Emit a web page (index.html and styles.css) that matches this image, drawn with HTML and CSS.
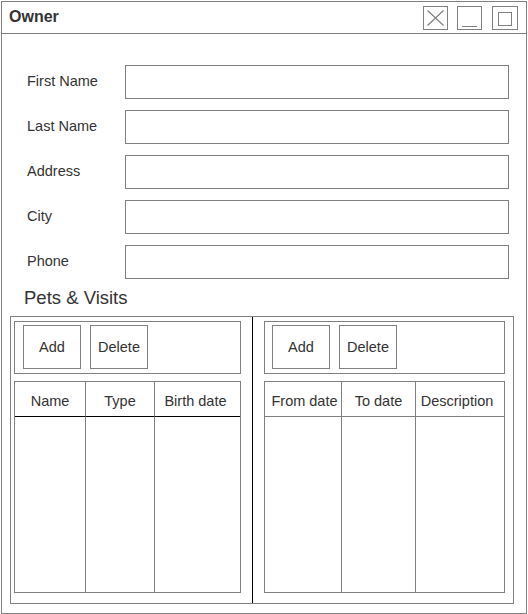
FILE: index.html
```html
<!DOCTYPE html>
<html>
<head>
<meta charset="utf-8">
<link rel="stylesheet" href="styles.css">
</head>
<body>
<div class="window">
  <div class="titlebar">
    <div class="title">Owner</div>
    <div class="controls">
      <div class="ctl ctl-close"><svg width="23" height="22" viewBox="0 0 23 22"><path d="M3.5 3.5 L19.5 18.5 M19.5 3.5 L3.5 18.5" stroke="#808080" stroke-width="1.2" fill="none"/></svg></div>
      <div class="ctl ctl-min"><svg width="23" height="22" viewBox="0 0 23 22"><path d="M4 19.5 H19" stroke="#808080" stroke-width="1" fill="none"/></svg></div>
      <div class="ctl ctl-max"><svg width="24" height="22" viewBox="0 0 24 22"><rect x="5.5" y="5.5" width="13" height="13" stroke="#808080" stroke-width="1" fill="none"/></svg></div>
    </div>
  </div>
  <div class="form">
    <div class="label">First Name</div><div class="input"></div>
    <div class="label">Last Name</div><div class="input"></div>
    <div class="label">Address</div><div class="input"></div>
    <div class="label">City</div><div class="input"></div>
    <div class="label">Phone</div><div class="input"></div>
  </div>
  <div class="section-title">Pets &amp; Visits</div>
  <div class="split">
    <div class="panel panel-left">
      <div class="toolbar">
        <div class="btn">Add</div>
        <div class="btn">Delete</div>
      </div>
      <div class="table table-pets">
        <div class="th">Name</div><div class="th">Type</div><div class="th">Birth date</div>
        <div class="td"></div><div class="td"></div><div class="td"></div>
      </div>
    </div>
    <div class="divider"></div>
    <div class="panel panel-right">
      <div class="toolbar">
        <div class="btn">Add</div>
        <div class="btn">Delete</div>
      </div>
      <div class="table table-visits">
        <div class="th">From date</div><div class="th">To date</div><div class="th">Description</div>
        <div class="td"></div><div class="td"></div><div class="td"></div>
      </div>
    </div>
  </div>
</div>
</body>
</html>
```

FILE: styles.css
```css
* { box-sizing: border-box; }
html, body { margin: 0; padding: 0; background: #fff; }
body {
  font-family: "Liberation Sans", Arial, sans-serif;
  font-size: 14.5px;
  color: #333;
}
.window {
  margin: 1px 0 0 1px;
  width: 526px;
  height: 613px;
  border: 1px solid #808080;
  display: flex;
  flex-direction: column;
}
.titlebar {
  height: 32px;
  border-bottom: 1px solid #808080;
  display: flex;
  justify-content: space-between;
  align-items: flex-start;
  padding: 0 8px 0 7px;
}
.title {
  font-weight: bold;
  font-size: 16px;
  line-height: 30px;
}
.controls {
  display: flex;
  padding-top: 4px;
}
.ctl {
  height: 24px;
  width: 25px;
  border: 1px solid #808080;
  display: flex;
}
.ctl svg { display: block; }
.ctl-min { margin-left: 9px; }
.ctl-max { margin-left: 10px; width: 26px; }
.form {
  display: grid;
  grid-template-columns: 98px 384px;
  row-gap: 11px;
  padding: 31px 0 0 25px;
}
.label {
  display: flex;
  align-items: center;
  height: 34px;
  padding-bottom: 3px;
}
.input {
  height: 34px;
  border: 1px solid #808080;
}
.section-title {
  height: 37px;
  display: flex;
  align-items: center;
  padding-left: 22px;
  font-size: 18.5px;
}
.split {
  margin-left: 8px;
  width: 504px;
  height: 288px;
  border: 1px solid #808080;
  display: grid;
  grid-template-columns: 241px 1px 260px;
}
.divider { background: #000; }
.panel {
  display: flex;
  flex-direction: column;
  padding-top: 4px;
  padding-bottom: 10px;
}
.panel-left { padding-left: 3px; padding-right: 11px; }
.panel-right { padding-left: 11px; padding-right: 8px; }
.toolbar {
  height: 53px;
  border: 1px solid #808080;
  display: flex;
  gap: 9px;
  padding: 3px 0 0 8px;
}
.panel-right .toolbar { padding-left: 7px; }
.btn {
  width: 58px;
  height: 44px;
  border: 1px solid #808080;
  display: flex;
  align-items: center;
  justify-content: center;
}
.table {
  margin-top: 7px;
  flex: 1;
  border: 1px solid #808080;
  display: grid;
  grid-template-rows: 35px 1fr;
}
.table-pets { grid-template-columns: 71px 69px 85px; }
.table-visits { grid-template-columns: 77px 74px 88px; }
.th {
  display: flex;
  align-items: center;
  justify-content: center;
  padding-top: 3px;
  border-bottom: 1px solid #808080;
  white-space: nowrap;
}
.table-pets .th { border-bottom-color: #000; }
.table-pets .th:nth-child(3) { padding-right: 4px; }
.table-visits .th:nth-child(1) { padding-left: 3px; }
.table-visits .th:nth-child(3) { padding-right: 6px; }
.th:nth-child(1), .th:nth-child(2),
.td:nth-child(4), .td:nth-child(5) {
  border-right: 1px solid #808080;
}
```
